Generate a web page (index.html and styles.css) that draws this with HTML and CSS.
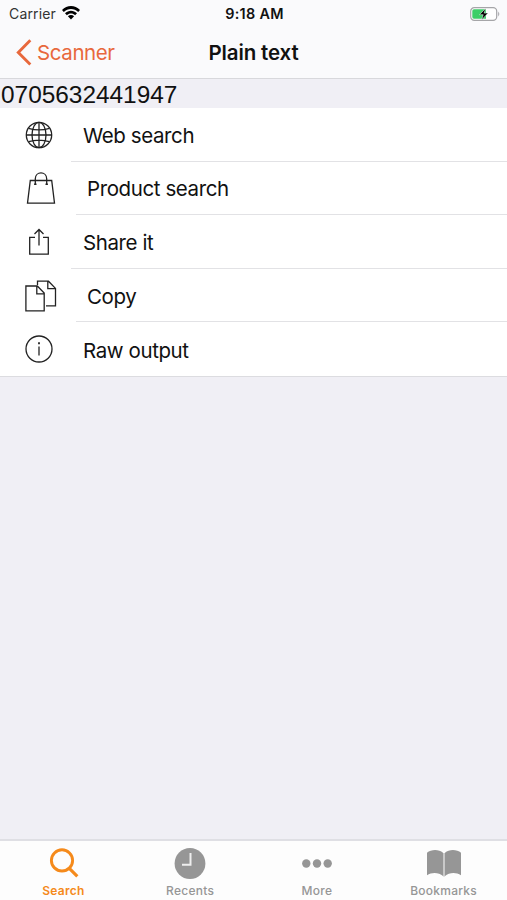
FILE: index.html
```html
<!DOCTYPE html>
<html lang="en">
<head>
<meta charset="utf-8">
<title>Plain text</title>
<link rel="stylesheet" href="styles.css">
</head>
<body>
<div class="screen">
  <header class="header">
    <div class="status">
      <div class="carrier"><span>Carrier</span>
        <svg width="18" height="14" viewBox="0 0 18 14"><path d="M0 4.1C5-1.3 13-1.3 18 4.1L16.2 6C12.3 2 5.7 2 1.8 6Z"/><path d="M3 7.3c3.4-3.4 8.6-3.4 12 0l-1.900 1.900c-2.300-2.300-5.900-2.300-8.200 0Z"/><path d="M5.900 10.200c1.800-1.600 4.400-1.600 6.200 0L9 13.400Z"/></svg>
      </div>
      <div class="time">9:18 AM</div>
      <div class="battery">
        <svg width="31" height="14" viewBox="0 0 31 14"><rect x=".7" y=".7" width="26" height="12.600" rx="3.600" fill="#fff" stroke="#a5a5a8" stroke-width="1.200"/><path d="M4 2.300h12v9.400H4Q2.300 11.700 2.300 10V4Q2.300 2.300 4 2.300Z" fill="#3dce68"/><path d="M28.200 4.500q2.200 2.500 0 5Z" fill="#a5a5a8"/><path d="M15.700 1.200 9.500 7.700h3.700l-1.600 5.200 6.500-6.800h-3.900Z" fill="#000" stroke="#fff" stroke-width=".5"/></svg>
      </div>
    </div>
    <nav class="nav">
      <div class="back"><svg width="17" height="27" viewBox="0 0 17 27"><path d="M15.300 1.300 3.300 13.400l12 12.100" fill="none" stroke="currentColor" stroke-width="2.900"/></svg><span>Scanner</span></div>
      <h1 class="title">Plain text</h1>
      <div></div>
    </nav>
  </header>
  <div class="code">0705632441947</div>
  <main class="list">
    <div class="row"><div class="icon"><svg width="28" height="28" viewBox="0 0 28 28"><circle cx="14" cy="14" r="12.700"/><ellipse cx="14" cy="14" rx="7" ry="12.700"/><path d="M14 1.300v25.400M1.300 14h25.400M3.600 7.400c6 1.800 14.800 1.800 20.800 0M3.600 20.600c6-1.800 14.800-1.800 20.800 0"/></svg></div><div class="label">Web search</div></div>
    <div class="row wide"><div class="icon"><svg width="30" height="34" viewBox="0 0 30 34"><path d="M4.300 9.500h21.400l2.800 22.700h-27ZM9.300 13V7.800c0-7.800 11.400-7.800 11.400 0V13"/><path d="M9.300 12.500v1.600M20.700 12.500v1.600" stroke-width="2.400"/></svg></div><div class="label">Product search</div></div>
    <div class="row"><div class="icon"><svg width="22" height="30" viewBox="0 0 22 30"><path d="M7 10.300H1.700v16.900h18.600V10.300H15M11 18.500V2.500M6.500 7 11 2.500 15.500 7"/></svg></div><div class="label">Share it</div></div>
    <div class="row wide"><div class="icon"><svg width="32" height="32" viewBox="0 0 32 32"><path d="M12.500 5V1.200h11l7 7.200v17.400H21M22.800 1.500v7.200h7.500M.9 6h11.400l6.900 7v17.800H.9ZM11.800 6.300v7.500h7.200"/></svg></div><div class="label">Copy</div></div>
    <div class="row"><div class="icon"><svg width="28" height="28" viewBox="0 0 28 28"><circle cx="14" cy="14" r="13"/><path d="M14 11.500v9"/><path d="M14 7.300v2" stroke-width="1.800"/></svg></div><div class="label">Raw output</div></div>
  </main>
  <footer class="tabs">
    <div class="tab active"><svg width="32" height="32" viewBox="0 0 32 32"><circle cx="15" cy="12.400" r="10.600" fill="none" stroke="currentColor" stroke-width="2.900"/><path d="m22.300 20.300 8 8" stroke="currentColor" stroke-width="3.200"/></svg><span>Search</span></div>
    <div class="tab"><svg width="32" height="32" viewBox="0 0 32 32"><circle cx="16" cy="15.500" r="15.400" fill="currentColor"/><path d="M16.500 5v11.800H8" fill="none" stroke="#eee" stroke-width="2"/></svg><span>Recents</span></div>
    <div class="tab"><svg width="32" height="32" viewBox="0 0 32 32" fill="currentColor"><circle cx="5.300" cy="15.500" r="4.200"/><circle cx="16" cy="15.500" r="4.200"/><circle cx="26.700" cy="15.500" r="4.200"/></svg><span>More</span></div>
    <div class="tab"><svg width="34" height="32" viewBox="0 0 34 32" fill="currentColor"><path d="M0 4.700C4 1.300 12 1 16 4.800V28C12 24.600 5 24 0 27.300ZM18 4.800C22 1 30 1.300 34 4.700V27.300C29 24 22 24.600 18 28Z"/><path d="M16 5h2v23l-1 1-1-1Z" fill="#c9c9c9"/></svg><span>Bookmarks</span></div>
  </footer>
</div>
</body>
</html>
```
FILE: styles.css
```css
* { box-sizing: border-box; }
body { margin: 0; background: #f0eff5; color: #111; font-family: Inter, "Liberation Sans", sans-serif; }
svg { display: block; flex: none; }
.screen { width: 507px; height: 900px; display: flex; flex-direction: column; }
.header { height: 79px; background: #fafafc; border-bottom: 1px solid #d8d8dc; }
.status { height: 26px; display: grid; grid-template-columns: 1fr auto 1fr; align-items: center; font-size: 14px; padding: 1px 7px 0 9px; }
.carrier { display: flex; align-items: center; gap: 6px; color: #333; letter-spacing: .15px; }
.carrier svg { fill: #000; margin-top: -1px; }
.time { font-weight: 600; font-size: 14.4px; letter-spacing: .3px; }
.battery { display: flex; justify-content: flex-end; margin-right: -1px; }
.nav { height: 53px; display: grid; grid-template-columns: 1fr auto 1fr; align-items: center; padding: 0 15px; }
.back { display: flex; align-items: center; gap: 5px; color: #e8683c; font-size: 20.5px; letter-spacing: -.4px; }
.title { margin: 0; font-size: 20.5px; font-weight: 600; letter-spacing: -.12px; }
.code { height: 29px; line-height: 31px; padding-left: 1px; font-family: "Liberation Sans", Arial, sans-serif; font-size: 24.4px; }
.list { height: 269px; background: #fff; border-bottom: 1px solid #dcdce0; display: grid; grid-template-rows: repeat(5, 1fr); }
.row { display: grid; grid-template-columns: 71px 1fr; --inset: 12px; }
.row.wide { grid-template-columns: 76px 1fr; --inset: 11px; }
.icon { display: flex; align-items: center; justify-content: center; padding-left: 7px; }
.wide .icon { padding-left: 5px; }
.icon svg { fill: none; stroke: #222; stroke-width: 1.3; }
.label { display: flex; align-items: center; padding: 2px 0 0 var(--inset); border-bottom: 1px solid #e2e2e5; font-size: 20.5px; letter-spacing: -.4px; }
.row:last-child .label { border-bottom: 0; }
.tabs { margin-top: auto; height: 61px; background: #fdfdfd; border-top: 2px solid #dfdfe4; display: grid; grid-template-columns: repeat(4, 1fr); padding-top: 7px; }
.tab { display: flex; flex-direction: column; align-items: center; gap: 3px; color: #969696; font-size: 12px; line-height: 15px; font-weight: 500; letter-spacing: .25px; }
.tab.active { color: #f58a1b; }
.tab.active span { font-weight: 600; }
```
